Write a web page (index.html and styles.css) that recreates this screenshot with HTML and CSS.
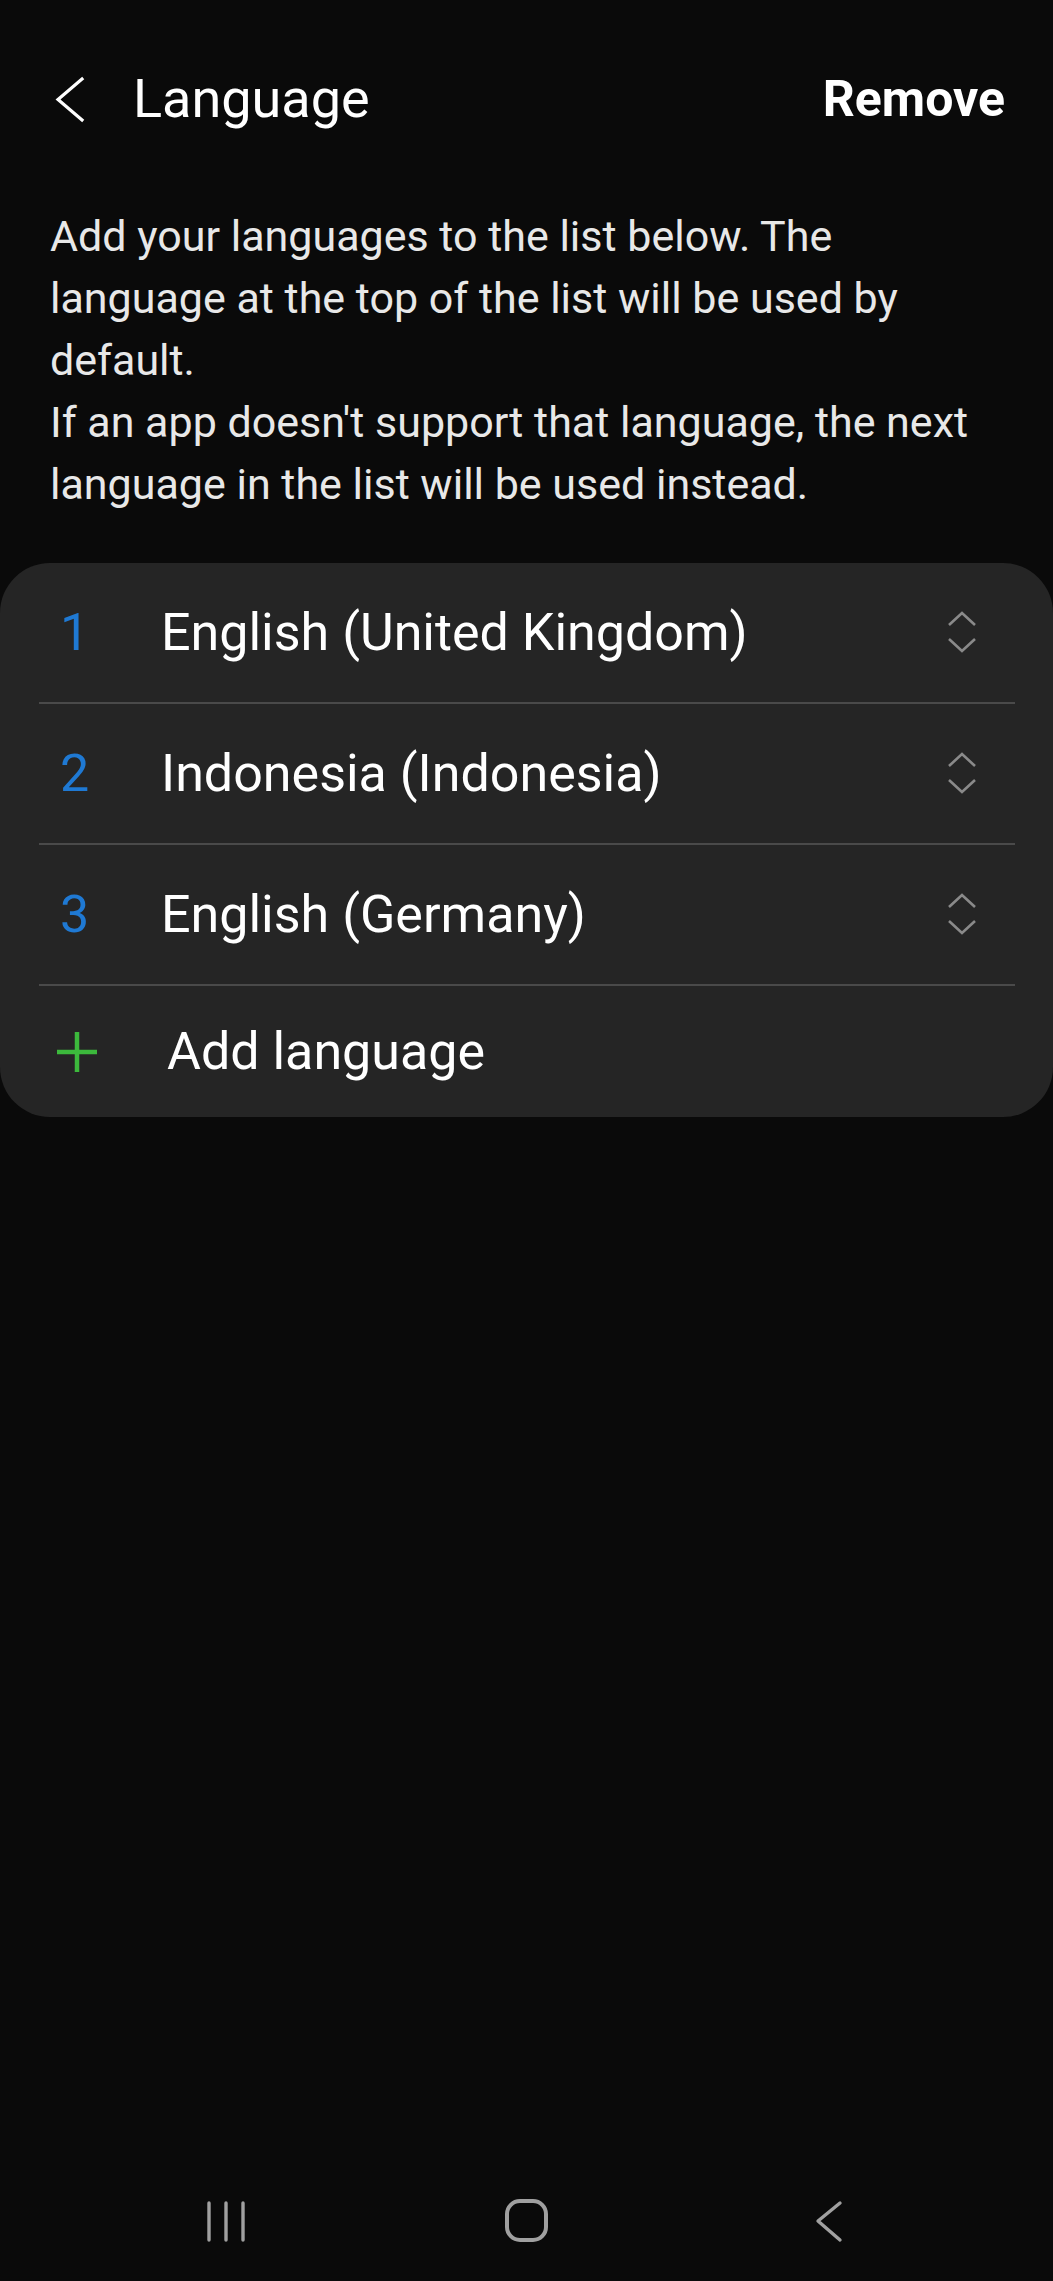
FILE: index.html
```html
<!DOCTYPE html>
<html lang="en">
<head>
<meta charset="utf-8">
<title>Language</title>
<link rel="stylesheet" href="styles.css">
</head>
<body>
<div class="screen">
  <header class="topbar">
    <div class="back">
      <svg width="30" height="48" viewBox="0 0 30 48"><polyline points="27,4 3,24.5 27,45" fill="none" stroke="#ffffff" stroke-width="3.2" stroke-linecap="square" stroke-linejoin="miter"/></svg>
    </div>
    <h1 class="title">Language</h1>
    <div class="action">Remove</div>
  </header>

  <p class="desc">Add your languages to the list below. The language at the top of the list will be used by default.<br>If an app doesn't support that language, the next language in the list will be used instead.</p>

  <section class="card">
    <div class="row">
      <span class="num">1</span>
      <span class="name">English (United Kingdom)</span>
      <svg class="reorder" width="30" height="44" viewBox="0 0 30 44"><polyline points="2,14 15,2 28,14" fill="none" stroke="#8a8a8a" stroke-width="2.6"/><polyline points="2,28 15,40 28,28" fill="none" stroke="#8a8a8a" stroke-width="2.6"/></svg>
    </div>
    <div class="divider"></div>
    <div class="row">
      <span class="num">2</span>
      <span class="name">Indonesia (Indonesia)</span>
      <svg class="reorder" width="30" height="44" viewBox="0 0 30 44"><polyline points="2,14 15,2 28,14" fill="none" stroke="#8a8a8a" stroke-width="2.6"/><polyline points="2,28 15,40 28,28" fill="none" stroke="#8a8a8a" stroke-width="2.6"/></svg>
    </div>
    <div class="divider"></div>
    <div class="row">
      <span class="num">3</span>
      <span class="name">English (Germany)</span>
      <svg class="reorder" width="30" height="44" viewBox="0 0 30 44"><polyline points="2,14 15,2 28,14" fill="none" stroke="#8a8a8a" stroke-width="2.6"/><polyline points="2,28 15,40 28,28" fill="none" stroke="#8a8a8a" stroke-width="2.6"/></svg>
    </div>
    <div class="divider"></div>
    <div class="row add">
      <span class="plus">
        <svg width="42" height="42" viewBox="0 0 42 42"><path d="M21 1 V41 M1 21 H41" stroke="#3cb93c" stroke-width="4.5" fill="none"/></svg>
      </span>
      <span class="name">Add language</span>
    </div>
  </section>

  <nav class="navbar">
    <div class="navbtn">
      <svg width="60" height="44" viewBox="0 0 60 44"><path d="M14 4 V41 M31 4 V41 M48 4 V41" stroke="#a0a0a0" stroke-width="3.4" stroke-linecap="round" fill="none"/></svg>
    </div>
    <div class="navbtn">
      <svg width="60" height="44" viewBox="0 0 60 44"><rect x="10" y="2" width="39" height="39" rx="13" ry="13" stroke="#a0a0a0" stroke-width="4" fill="none"/></svg>
    </div>
    <div class="navbtn">
      <svg width="60" height="44" viewBox="0 0 60 44"><polyline points="41,4 19,22 41,41" stroke="#a0a0a0" stroke-width="3.4" stroke-linecap="round" stroke-linejoin="round" fill="none"/></svg>
    </div>
  </nav>
</div>
</body>
</html>
```

FILE: styles.css
```css
* {
  box-sizing: border-box;
}

html, body {
  margin: 0;
  padding: 0;
  background: #0a0a0a;
}

body {
  font-family: Roboto, "Noto Sans", "Liberation Sans", sans-serif;
  color: #ffffff;
}

.screen {
  min-height: 2281px;
  display: flex;
  flex-direction: column;
}

.topbar {
  height: 198px;
  display: flex;
  align-items: center;
  padding: 0 48px 0 55px;
}

.back {
  width: 30px;
  height: 48px;
  display: flex;
}

.title {
  margin: 0 0 0 48px;
  font-size: 54px;
  font-weight: 400;
  line-height: 1;
  flex: 1;
  color: #ffffff;
}

.action {
  font-size: 50px;
  font-weight: 700;
  line-height: 1;
  color: #ffffff;
}

.desc {
  margin: 7px 0 0;
  padding: 0 50px;
  font-size: 43px;
  line-height: 62px;
  color: #e8e8e8;
}

.card {
  margin-top: 48px;
  background: #252525;
  border-radius: 50px;
  display: flex;
  flex-direction: column;
}

.row {
  height: 139px;
  display: flex;
  align-items: center;
  padding: 0 76px 0 60px;
}

.row.add {
  height: 131px;
  padding-left: 56px;
}

.num {
  width: 101px;
  font-size: 52px;
  color: #1f79d3;
  line-height: 1;
}

.name {
  flex: 1;
  font-size: 52px;
  line-height: 1;
  color: #ffffff;
}

.reorder {
  display: block;
}

.plus {
  width: 111px;
  height: 42px;
  display: flex;
}

.divider {
  height: 2px;
  margin: 0 38px 0 39px;
  background: #4a4a4a;
}

.navbar {
  margin-top: auto;
  height: 121px;
  display: flex;
  justify-content: center;
  align-items: center;
  gap: 242px;
}

.navbtn {
  width: 60px;
  height: 44px;
  display: flex;
}
```
